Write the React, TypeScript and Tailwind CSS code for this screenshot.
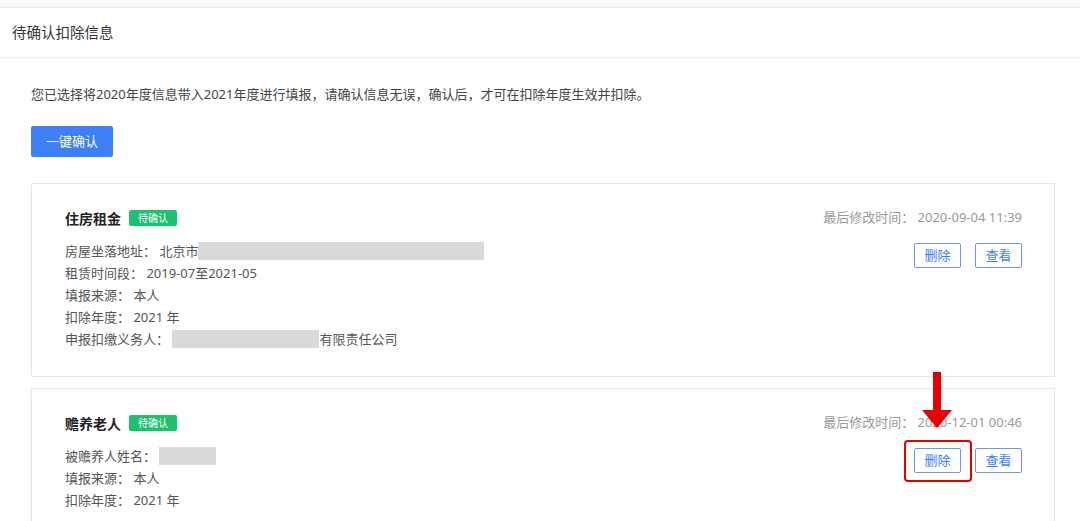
import React from "react";

const font = { fontFamily: '"Noto Sans", "Noto Sans CJK SC", sans-serif' };

function Badge() {
  return (
    <span className="ml-2 inline-flex h-[16px] items-center rounded-[2px] bg-[#1dc26f] px-[9px] text-[10px] leading-none text-white">
      待确认
    </span>
  );
}

function Mask({ w }: { w: number }) {
  return <span className="inline-block h-[18px] bg-[#d9d9d9] align-middle" style={{ width: w }} />;
}

function ActionButton({ label }: { label: string }) {
  return (
    <button className="flex h-[25px] w-[47px] items-center justify-center rounded-[2px] border border-[#6f95ec] bg-white text-[13px] text-[#3d7ff5]">
      {label}
    </button>
  );
}

function Card({
  title,
  time,
  lines,
  highlight,
}: {
  title: string;
  time: string;
  lines: React.ReactNode[];
  highlight?: boolean;
}) {
  return (
    <div className="flex justify-between border border-[#e6e6e6] bg-white pl-[33px] pr-[32px] pt-[24px] pb-[26px] shadow-[-4px_0_6px_-4px_rgba(0,0,0,0.06)]">
      <div className="flex flex-col">
        <div className="flex h-[20px] items-center">
          <span className="text-[14px] font-bold text-[#222]">{title}</span>
          <Badge />
        </div>
        <div className="mt-[12px] flex flex-col text-[13px] leading-[22px] text-[#555]">
          {lines.map((l, i) => (
            <div key={i} className="flex h-[22px] items-center whitespace-pre">
              {l}
            </div>
          ))}
        </div>
      </div>
      <div className="flex flex-col items-end">
        <div className="flex h-[20px] items-center text-[13px] text-[#9a9a9a]">最后修改时间： {time}</div>
        <div className="mt-[15px] flex gap-[14px]">
          <div className="relative">
            <ActionButton label="删除" />
            {highlight && (
              <div className="pointer-events-none absolute -left-[10px] -right-[11px] -top-[8px] -bottom-[9px] rounded-[4px] border-[2px] border-[#e50000]" />
            )}
          </div>
          <ActionButton label="查看" />
        </div>
      </div>
    </div>
  );
}

export default function App() {
  return (
    <div className="relative h-[521px] w-[1080px] overflow-hidden bg-white text-[#333]" style={font}>
      <div className="h-[8px] border-b border-[#e9e9e9] bg-[#f8f8f8]" />
      <div className="flex h-[50px] items-center border-b border-[#ececec] px-[12px] text-[14.5px] text-[#333]">
        待确认扣除信息
      </div>
      <div className="pl-[31px] pr-[25px] pt-[26px]">
        <p className="h-[20px] text-[13px] leading-[20px] text-[#444]">
          您已选择将2020年度信息带入2021年度进行填报，请确认信息无误，确认后，才可在扣除年度生效并扣除。
        </p>
        <button className="mt-[22px] flex h-[31px] w-[82px] items-center justify-center rounded-[2px] bg-[#3d7ff5] text-[13px] text-white">
          一键确认
        </button>
        <div className="mt-[26px] flex flex-col gap-[11px]">
          <Card
            title="住房租金"
            time="2020-09-04 11:39"
            lines={[
              <>
                房屋坐落地址： 北京市<Mask w={286} />
              </>,
              "租赁时间段： 2019-07至2021-05",
              "填报来源： 本人",
              "扣除年度： 2021 年",
              <>
                申报扣缴义务人： <Mask w={147} />有限责任公司
              </>,
            ]}
          />
          <Card
            title="赡养老人"
            time="2020-12-01 00:46"
            highlight
            lines={[
              <>
                被赡养人姓名： <Mask w={57} />
              </>,
              "填报来源： 本人",
              "扣除年度： 2021 年",
            ]}
          />
        </div>
      </div>
      <svg className="absolute left-[922px] top-[372px]" width="30" height="56" viewBox="0 0 30 56">
        <rect x="11" y="0" width="8" height="40" fill="#e60000" />
        <polygon points="0,38 30,38 15,56" fill="#e60000" />
      </svg>
    </div>
  );
}
